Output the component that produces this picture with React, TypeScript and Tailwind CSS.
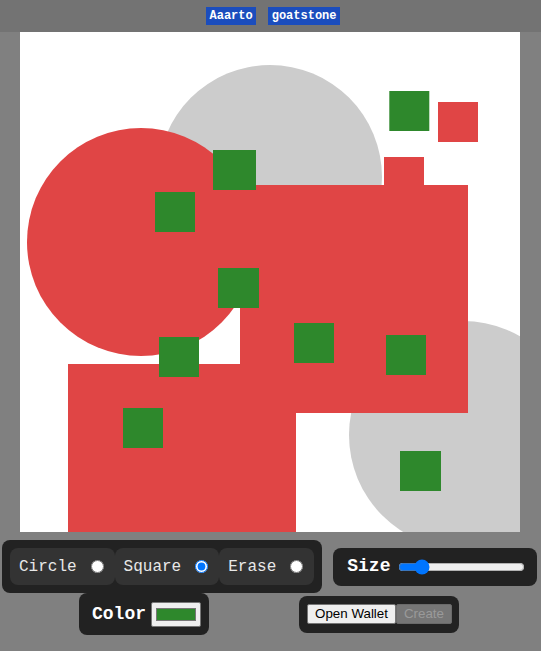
import React, { useState } from 'react';

const mono = { fontFamily: '"Liberation Mono", "Courier New", monospace' };

const grayCircles = [
  { cx: 250, cy: 145, r: 112 },
  { cx: 443, cy: 403, r: 114 },
];

const redCircles = [{ cx: 121, cy: 210, r: 114 }];

const redRects = [
  { x: 220, y: 153, w: 228, h: 228 },
  { x: 48, y: 332, w: 228, h: 228 },
  { x: 364, y: 125, w: 40, h: 40 },
  { x: 418, y: 70, w: 40, h: 40 },
];

const greenRects = [
  { x: 369.3, y: 59, w: 40, h: 40 },
  { x: 193, y: 118, w: 43, h: 40 },
  { x: 135, y: 160, w: 40, h: 40 },
  { x: 198, y: 236, w: 41, h: 40 },
  { x: 139, y: 305, w: 40, h: 40 },
  { x: 103, y: 376, w: 40, h: 40 },
  { x: 274, y: 291, w: 40, h: 40 },
  { x: 366, y: 303, w: 40, h: 40 },
  { x: 380, y: 419, w: 41, h: 40 },
];

const Board = () => (
  <svg width={500} height={500} viewBox="0 0 500 500" className="block bg-white">
    {grayCircles.map((c, i) => (
      <circle key={i} cx={c.cx} cy={c.cy} r={c.r} fill="#cccccc" />
    ))}
    {redCircles.map((c, i) => (
      <circle key={i} cx={c.cx} cy={c.cy} r={c.r} fill="#e04545" />
    ))}
    {redRects.map((r, i) => (
      <rect key={i} x={r.x} y={r.y} width={r.w} height={r.h} fill="#e04545" />
    ))}
    {greenRects.map((r, i) => (
      <rect key={i} x={r.x} y={r.y} width={r.w} height={r.h} fill="#2e882c" />
    ))}
  </svg>
);

const App = () => {
  const [shape, setShape] = useState('square');
  const [size, setSize] = useState(14);
  const [color, setColor] = useState('#2e882c');

  const tools = [
    { id: 'circle', label: 'Circle' },
    { id: 'square', label: 'Square' },
    { id: 'erase', label: 'Erase' },
  ];

  return (
    <div className="min-h-[651px] w-[541px] bg-[#808080] overflow-hidden">
      <header className="h-8 bg-[#737373] flex items-center justify-center gap-3 pl-[5px]" style={mono}>
        <span className="bg-[#1b4dbd] text-white text-[12px] font-bold leading-[18px] px-[3.5px]">Aaarto</span>
        <span className="bg-[#1b4dbd] text-white text-[12px] font-bold leading-[18px] px-[3.5px]">goatstone</span>
      </header>

      <div className="pl-5">
        <Board />
      </div>

      <div className="pt-2 flex items-center gap-3 pl-[2px]" style={mono}>
        <div className="bg-[#222] rounded-lg p-2 flex">
          {tools.map((t) => (
            <label
              key={t.id}
              className="bg-[#333] rounded-lg h-[37px] flex items-center pl-[9px] pr-[11px] text-[16px] text-[#e8e8e8]"
            >
              <span>{t.label}</span>
              <input
                type="radio"
                name="shape"
                checked={shape === t.id}
                onChange={() => setShape(t.id)}
                className="ml-[14px] w-[13px] h-[13px] accent-[#0075ff]"
              />
            </label>
          ))}
        </div>

        <div className="bg-[#222] rounded-lg h-[38px] w-[204px] flex items-center pl-[14px] gap-2 -ml-[1px]">
          <span className="text-white text-[18px] font-bold">Size</span>
          <input
            type="range"
            min={0}
            max={100}
            value={size}
            onChange={(e) => setSize(Number(e.target.value))}
            className="w-[127px] accent-[#0075ff]"
          />
        </div>
      </div>

      <div className="flex items-center pl-[79px] gap-[90px]" style={mono}>
        <div className="bg-[#222] rounded-lg h-[42px] w-[130px] flex items-center pl-[13px] gap-[5px]">
          <span className="text-white text-[18px] font-bold">Color</span>
          <input
            type="color"
            value={color}
            onChange={(e) => setColor(e.target.value)}
            className="w-[50px] h-[25px] bg-[#efefef] border border-[#767676] px-[2px] py-[1px] rounded-[2px]"
          />
        </div>

        <div
          className="bg-[#222] rounded-lg h-[37px] w-[160px] flex items-center pl-2"
          style={{ fontFamily: '"Liberation Sans", Arial, sans-serif' }}
        >
          <button className="h-5 w-[89px] bg-[#efefef] border border-[#767676] text-[13.33px] text-black leading-none rounded-[2px]">
            Open Wallet
          </button>
          <button
            disabled
            className="h-5 w-[56px] bg-[#767676] border border-[#6a6a6a] text-[13.33px] text-[#9a9a9a] leading-none rounded-[2px]"
          >
            Create
          </button>
        </div>
      </div>
    </div>
  );
};

export default App;
